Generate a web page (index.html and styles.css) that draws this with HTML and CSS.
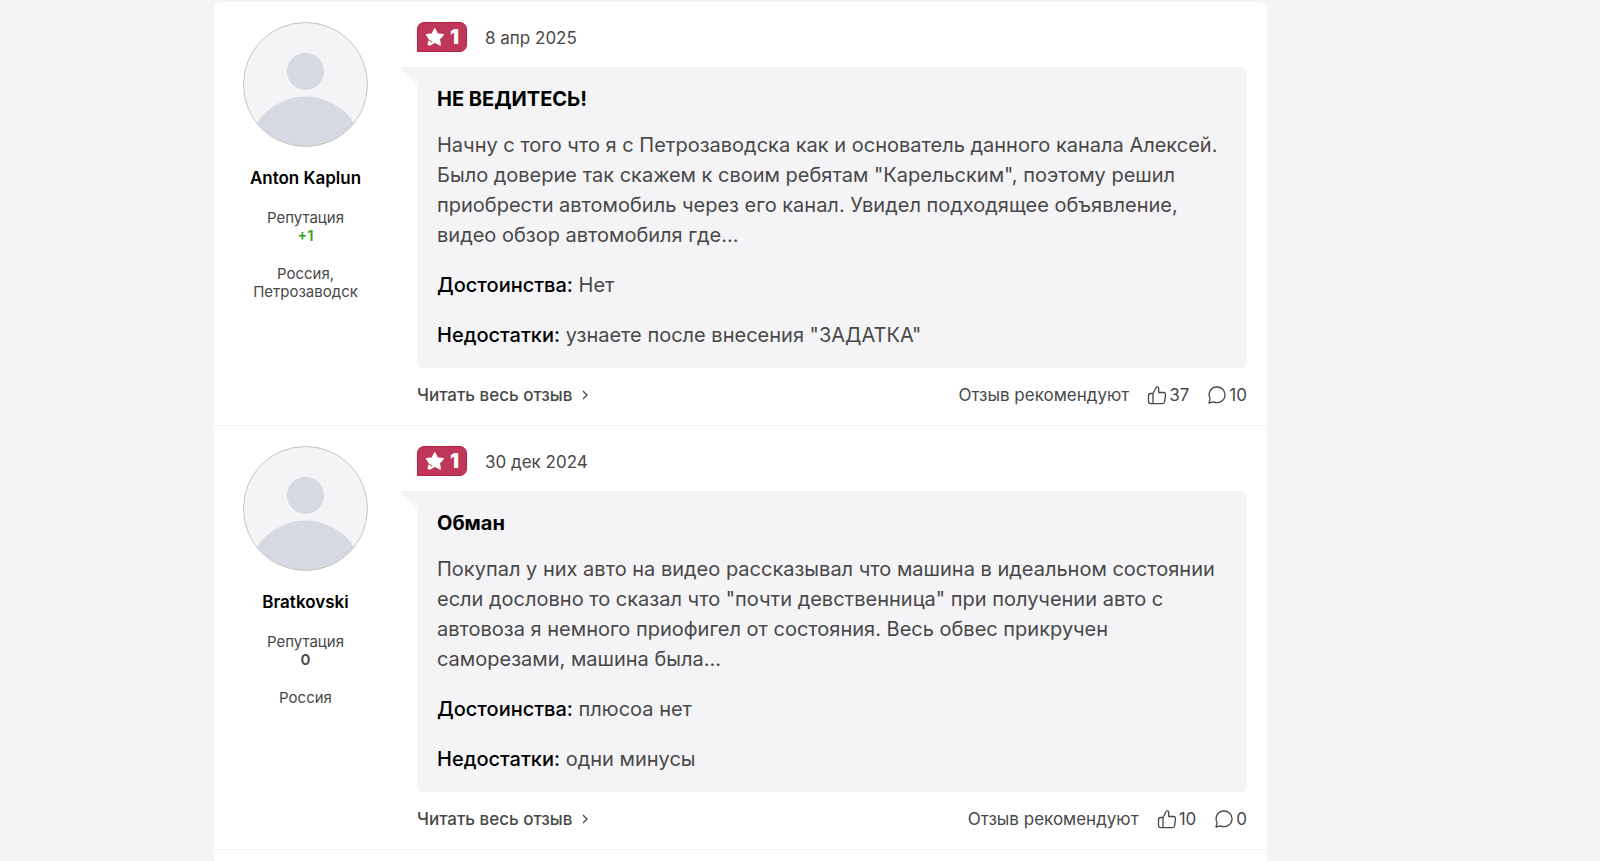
FILE: index.html
```html
<!DOCTYPE html>
<html lang="ru">
<head>
<meta charset="utf-8">
<meta name="viewport" content="width=device-width, initial-scale=1">
<title>Отзывы</title>
<link rel="stylesheet" href="styles.css">
</head>
<body>
<svg class="sprite" aria-hidden="true">
  <symbol id="avatar" viewBox="0 0 125 125">
    <clipPath id="round"><circle cx="62.5" cy="62.5" r="62"/></clipPath>
    <circle cx="62.5" cy="62.5" r="62" fill="#f4f4f6"/>
    <g clip-path="url(#round)" fill="#d6d9e2">
      <circle cx="62.5" cy="49.5" r="18.5"/>
      <circle cx="62.5" cy="132" r="57.5"/>
    </g>
    <circle cx="62.5" cy="62.5" r="62" fill="none" stroke="#c4c4c6"/>
  </symbol>
  <symbol id="star" viewBox="0 0 20 20">
    <path d="M9.800 1.900L12.300 6.900L18.200 7.800L14.300 12L15.300 18L9.800 15.200L5 18L3.200 17.400L4.600 12L1.600 7.800L7.300 6.900Z" fill="#fff" stroke="#fff" stroke-width="1.400" stroke-linejoin="round"/>
    <path d="M2.500 12.800L4.800 13.600L7.200 15.600" fill="none" stroke="#c03658" stroke-width="1"/>
  </symbol>
  <symbol id="like" viewBox="0 0 20 20">
    <path d="M6 8.500L9.300 2.300C9.700 1.500 11.700 1.700 11.700 3.500V7.500H16.500C18 7.500 18.700 8.400 18.500 9.600L17.600 16.800C17.500 18 16.800 18.600 15.700 18.600H3.800C2.300 18.600 1.500 17.800 1.500 16.500V10.700C1.500 9.300 2.300 8.500 3.700 8.500H6ZM6 8.500V18.600" fill="none" stroke="currentColor" stroke-width="1.300" stroke-linejoin="round"/>
  </symbol>
  <symbol id="comment" viewBox="0 0 20 20">
    <path d="M2 18L3.100 13.700C.4 8.300 3.700 2 10 2C14.500 2 18 5.400 18 9.700C18 15.500 12 19.200 6.500 16.800L2 18Z" fill="none" stroke="currentColor" stroke-width="1.300" stroke-linejoin="round"/>
  </symbol>
  <symbol id="chevron" viewBox="0 0 8 12">
    <path d="M2 2l4 4-4 4" fill="none" stroke="currentColor" stroke-width="1.300"/>
  </symbol>
</svg>
<main class="page">
  <div class="reviews">
    <article class="review">
      <aside class="author">
        <svg class="avatar" role="img" aria-label="Anton Kaplun"><use href="#avatar"/></svg>
        <a class="name" href="#">Anton Kaplun</a>
        <div class="meta">Репутация<strong class="positive">+1</strong></div>
        <div class="meta">Россия,<br>Петрозаводск</div>
      </aside>
      <div class="content">
        <header class="head">
          <span class="rating"><svg class="star"><use href="#star"/></svg>1</span>
          <time datetime="2025-04-08">8 апр 2025</time>
        </header>
        <div class="bubble">
          <h2 class="title">НЕ ВЕДИТЕСЬ!</h2>
          <p class="text">Начну с того что я с Петрозаводска как и основатель данного канала Алексей.<br>Было доверие так скажем к своим ребятам "Карельским", поэтому решил<br>приобрести автомобиль через его канал. Увидел подходящее объявление,<br>видео обзор автомобиля где...</p>
          <p class="text"><b>Достоинства:</b> Нет</p>
          <p class="text"><b>Недостатки:</b> узнаете после внесения "ЗАДАТКА"</p>
        </div>
        <footer class="foot">
          <a class="more" href="#">Читать весь отзыв<svg class="chevron"><use href="#chevron"/></svg></a>
          <span class="recommend">Отзыв рекомендуют</span>
          <button class="action" type="button" aria-label="Рекомендую, 37"><svg class="icon"><use href="#like"/></svg>37</button>
          <a class="action" href="#" aria-label="Комментарии, 10"><svg class="icon"><use href="#comment"/></svg>10</a>
        </footer>
      </div>
    </article>
    <article class="review">
      <aside class="author">
        <svg class="avatar" role="img" aria-label="Bratkovski"><use href="#avatar"/></svg>
        <a class="name" href="#">Bratkovski</a>
        <div class="meta">Репутация<strong>0</strong></div>
        <div class="meta">Россия</div>
      </aside>
      <div class="content">
        <header class="head">
          <span class="rating"><svg class="star"><use href="#star"/></svg>1</span>
          <time datetime="2024-12-30">30 дек 2024</time>
        </header>
        <div class="bubble">
          <h2 class="title">Обман</h2>
          <p class="text">Покупал у них авто на видео рассказывал что машина в идеальном состоянии<br>если дословно то сказал что "почти девственница" при получении авто с<br>автовоза я немного приофигел от состояния. Весь обвес прикручен<br>саморезами, машина была...</p>
          <p class="text"><b>Достоинства:</b> плюсоа нет</p>
          <p class="text"><b>Недостатки:</b> одни минусы</p>
        </div>
        <footer class="foot">
          <a class="more" href="#">Читать весь отзыв<svg class="chevron"><use href="#chevron"/></svg></a>
          <span class="recommend">Отзыв рекомендуют</span>
          <button class="action" type="button" aria-label="Рекомендую, 10"><svg class="icon"><use href="#like"/></svg>10</button>
          <a class="action" href="#" aria-label="Комментарии, 0"><svg class="icon"><use href="#comment"/></svg>0</a>
        </footer>
      </div>
    </article>
  </div>
</main>
</body>
</html>
```
FILE: styles.css
```css
* {
  box-sizing: border-box;
}

body {
  margin: 0;
  background: #f4f4f6;
  color: #484848;
  font-family: Inter, "Noto Sans", sans-serif;
  font-size: 17px;
  line-height: 24px;
}

a {
  color: inherit;
  text-decoration: none;
}

.sprite {
  position: absolute;
  width: 0;
  height: 0;
}

.page {
  display: flex;
  min-height: 100vh;
  padding: 2px 333px 0 214px;
}

.reviews {
  flex: 1;
  min-width: 0;
  background: #fff;
  border-radius: 7px 7px 0 0;
}

.review {
  display: flex;
  gap: 40px;
  padding: 20px 20px 18px;
  border-bottom: 1px solid #f4f4f6;
}

.author {
  display: flex;
  flex: 0 0 143px;
  flex-direction: column;
  align-items: center;
  gap: 19px;
  text-align: center;
}

.avatar {
  width: 125px;
  height: 125px;
}

.name {
  color: #000;
  font-weight: 600;
}

.meta {
  font-size: 15px;
  line-height: 18px;
}

.meta + .meta {
  margin-top: 1px;
}

.meta strong {
  display: block;
  font-weight: 600;
}

.meta .positive {
  color: #41a11b;
}

.content {
  flex: 1;
  min-width: 0;
}

.head {
  display: flex;
  align-items: center;
  gap: 18px;
  margin-bottom: 15px;
}

.head time {
  padding-top: 2px;
}

.rating {
  display: flex;
  align-items: center;
  justify-content: center;
  gap: 5px;
  width: 50px;
  height: 30px;
  background: #c03658;
  border: 1px solid #b81f47;
  border-radius: 7px 7px 7px 0;
  color: #fff;
  font-size: 20px;
  font-weight: 900;
}

.star {
  width: 20px;
  height: 20px;
}

.bubble {
  position: relative;
  padding: 20px 20px 18px;
  background: #f4f4f6;
  border-radius: 0 7px 7px 7px;
}

.bubble::before {
  content: "";
  position: absolute;
  top: 0;
  right: 100%;
  border-top: 18px solid #f4f4f6;
  border-left: 18px solid transparent;
}

.title {
  margin: 0 0 19px;
  color: #000;
  font-size: 20px;
  font-weight: 700;
  line-height: 24px;
}

.text {
  margin: 0;
  font-size: 20px;
  line-height: 30px;
}

.text + .text {
  margin-top: 20px;
}

.text b {
  color: #000;
  font-weight: 500;
}

.foot {
  display: flex;
  align-items: center;
  gap: 18px;
  padding-top: 15px;
}

.more {
  display: flex;
  align-items: center;
  gap: 9px;
  margin-right: auto;
  font-weight: 500;
}

.chevron {
  width: 8px;
  height: 12px;
}

.action {
  display: flex;
  align-items: center;
  gap: 2px;
  padding: 0;
  background: none;
  border: 0;
  color: inherit;
  font: inherit;
  cursor: pointer;
}

.icon {
  width: 20px;
  height: 20px;
}
```
